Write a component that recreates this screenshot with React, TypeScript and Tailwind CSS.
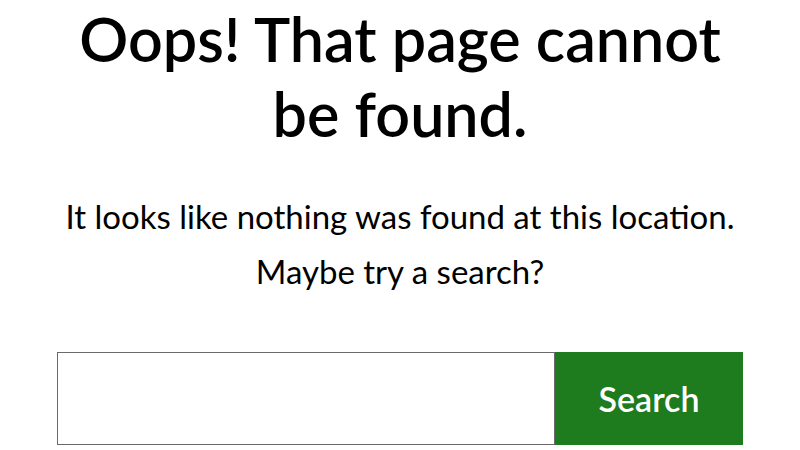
import React from "react";

export default function App() {
  return (
    <div className="w-[800px] h-[450px] overflow-hidden bg-white flex flex-col items-center font-['Lato',sans-serif] text-black">
      <h1 className="mt-[1px] text-center text-[61px] leading-[75px] font-semibold">
        Oops! That page cannot
        <br />
        be found.
      </h1>
      <p className="mt-[38px] text-[33px] leading-[55px] text-center">
        It looks like nothing was found at this location.
        <br />
        Maybe try a search?
      </p>
      <form className="mt-[53px] flex w-[686px] h-[93px]" onSubmit={(e) => e.preventDefault()}>
        <input type="search" className="flex-1 border border-[#6b6b6b] bg-white outline-none px-3" />
        <button type="submit" className="w-[188px] bg-[#1e7b1e] text-white text-[34px] font-semibold">
          Search
        </button>
      </form>
    </div>
  );
}
